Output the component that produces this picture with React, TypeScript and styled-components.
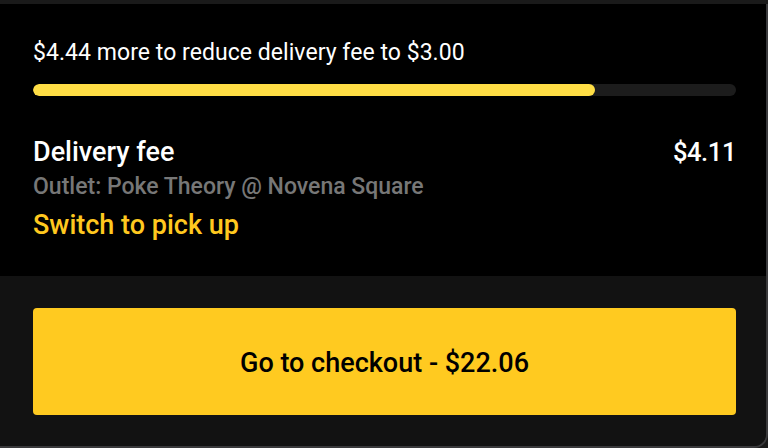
import styled, { createGlobalStyle } from 'styled-components';

const GlobalStyle = createGlobalStyle`
  html, body {
    margin: 0;
    padding: 0;
    background: #1a1a1a;
    overflow: hidden;
  }
  body {
    font-family: Roboto, "Liberation Sans", sans-serif;
  }
`;

const Card = styled.div`
  margin-top: 4px;
  width: 766px;
  height: 442px;
  border-right: 2px solid #3a3a3c;
  border-bottom: 2px solid #3a3a3c;
  border-bottom-right-radius: 14px;
  overflow: hidden;
  display: flex;
  flex-direction: column;
`;

const Summary = styled.section`
  background: #000;
  height: 272px;
  box-sizing: border-box;
  padding: 35px 30px 0 33px;
  display: flex;
  flex-direction: column;
`;

const Hint = styled.div`
  color: #fff;
  font-size: 23px;
  line-height: 28px;
  font-weight: 400;
  letter-spacing: 0.05px;
`;

const Track = styled.div`
  margin-top: 17px;
  height: 12px;
  border-radius: 6px;
  background: #1c1c1c;
  overflow: hidden;
`;

const Fill = styled.div`
  height: 100%;
  border-radius: 6px;
  background: #ffde45;
`;

const FeeRow = styled.div`
  margin-top: 39px;
  display: flex;
  justify-content: space-between;
  align-items: baseline;
`;

const FeeText = styled.div<{ $price?: boolean }>`
  color: #fff;
  font-size: ${(p) => (p.$price ? '25.5px' : '27px')};
  line-height: 34px;
  font-weight: 500;
  letter-spacing: ${(p) => (p.$price ? '-0.4px' : '0')};
`;

const Outlet = styled.div`
  color: #777;
  font-size: 23px;
  line-height: 36px;
  font-weight: 500;
`;

const SwitchLink = styled.a`
  color: #ffc81f;
  font-size: 27px;
  line-height: 40px;
  font-weight: 500;
  cursor: pointer;
`;

const Footer = styled.section`
  flex: 1;
  background: #121212;
  padding: 32px 30px 0 33px;
`;

const CheckoutButton = styled.button`
  width: 100%;
  height: 107px;
  padding: 3px 0 0;
  border: none;
  border-radius: 4px;
  background: #ffca20;
  color: #000;
  font-family: inherit;
  font-size: 27px;
  font-weight: 500;
  cursor: pointer;
`;

const App: React.FC = () => {
  const progress = 0.8;

  return (
    <>
      <GlobalStyle />
      <Card>
        <Summary>
          <Hint>$4.44 more to reduce delivery fee to $3.00</Hint>
          <Track>
            <Fill style={{ width: `${progress * 100}%` }} />
          </Track>
          <FeeRow>
            <FeeText>Delivery fee</FeeText>
            <FeeText $price>$4.11</FeeText>
          </FeeRow>
          <Outlet>Outlet: Poke Theory @ Novena Square</Outlet>
          <SwitchLink>Switch to pick up</SwitchLink>
        </Summary>
        <Footer>
          <CheckoutButton>Go to checkout - $22.06</CheckoutButton>
        </Footer>
      </Card>
    </>
  );
};

export default App;
